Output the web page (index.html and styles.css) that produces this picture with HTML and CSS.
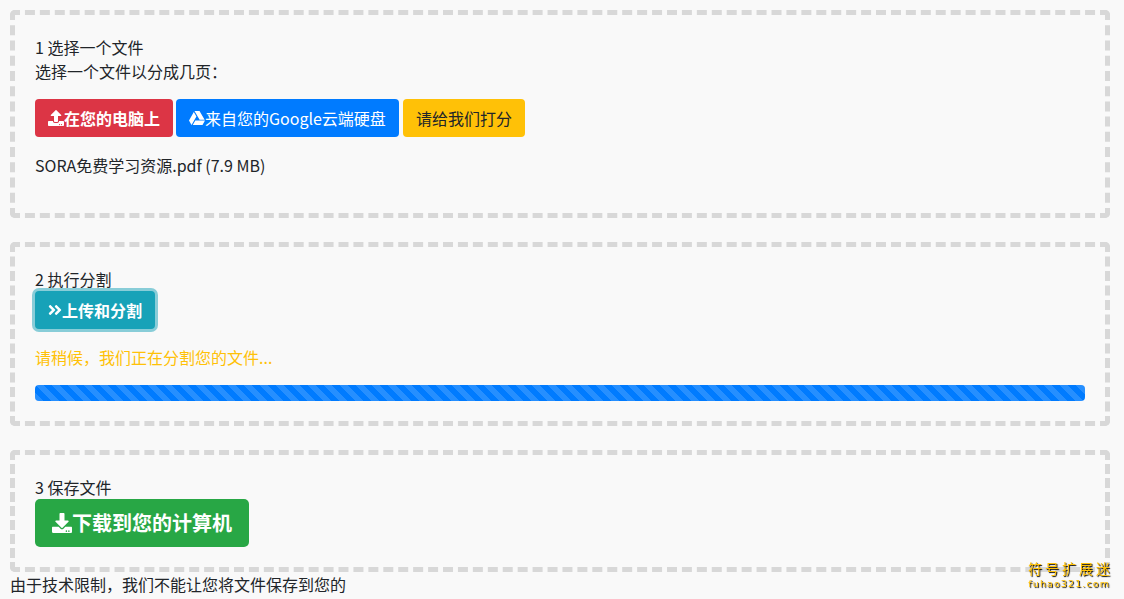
FILE: index.html
```html
<!DOCTYPE html>
<html lang="zh">
<head>
<title>分割PDF</title>
<meta charset="utf-8" />
<link rel="stylesheet" href="styles.css">
</head>
<body>
<div class="step">
  <div>1 选择一个文件</div>
  <p>选择一个文件以分成几页：</p>
  <div class="btn-row">
    <a class="btn btn-danger strong"><svg class="ico" viewBox="0 0 512 512"><path d="M296 384h-80c-13.3 0-24-10.7-24-24V192h-87.7c-17.8 0-26.7-21.5-14.1-34.1L242.3 5.7c7.5-7.5 19.8-7.5 27.3 0l152.2 152.2c12.6 12.6 3.7 34.1-14.1 34.1H320v168c0 13.3-10.7 24-24 24zm216-8v112c0 13.3-10.7 24-24 24H24c-13.3 0-24-10.7-24-24V376c0-13.3 10.7-24 24-24h136v8c0 30.9 25.1 56 56 56h80c30.9 0 56-25.1 56-56v-8h136c13.3 0 24 10.7 24 24zm-124 88c0-11-9-20-20-20s-20 9-20 20 9 20 20 20 20-9 20-20zm64 0c0-11-9-20-20-20s-20 9-20 20 9 20 20 20 20-9 20-20z"/></svg>在您的电脑上</a>
    <a class="btn btn-primary"><svg class="ico" viewBox="0 0 512 512"><path d="M339 314.9L175.4 32h161.2l163.6 282.9H339zm-137.5 23.6L120.9 480h310.5L512 338.5H201.5zM154.1 67.4L0 338.5 80.6 480 237 208.8 154.1 67.4z"/></svg>来自您的Google云端硬盘</a>
    <a class="btn btn-warning">请给我们打分</a>
  </div>
  <p class="file-name">SORA免费学习资源.pdf (7.9 MB)</p>
</div>

<div class="step">
  <div>2 执行分割</div>
  <div class="btn-row">
    <a class="btn btn-info strong"><svg class="ico ico-narrow" viewBox="0 0 448 512"><path d="M224.3 273l-136 136c-9.4 9.4-24.6 9.4-33.9 0l-22.6-22.6c-9.4-9.4-9.4-24.6 0-33.9l96.4-96.4-96.4-96.4c-9.4-9.4-9.4-24.6 0-33.9L54.3 103c9.4-9.4 24.6-9.4 33.9 0l136 136c9.5 9.4 9.5 24.6.1 34zm192-34l-136-136c-9.4-9.4-24.6-9.4-33.9 0l-22.6 22.6c-9.4 9.4-9.4 24.6 0 33.9l96.4 96.4-96.4 96.4c-9.4 9.4-9.4 24.6 0 33.9l22.6 22.6c9.4 9.4 24.6 9.4 33.9 0l136-136c9.4-9.2 9.4-24.4 0-33.8z"/></svg>上传和分割</a>
  </div>
  <p class="wait">请稍候，我们正在分割您的文件...</p>
  <div class="progress"><div class="progress-bar"></div></div>
</div>

<div class="step last">
  <div>3 保存文件</div>
  <div class="btn-row">
    <a class="btn btn-lg btn-success strong"><svg class="ico" viewBox="0 0 512 512"><path d="M216 0h80c13.3 0 24 10.7 24 24v168h87.7c17.8 0 26.7 21.5 14.1 34.1L269.7 378.3c-7.5 7.5-19.8 7.5-27.3 0L90.1 226.1c-12.6-12.6-3.7-34.1 14.1-34.1H192V24c0-13.3 10.7-24 24-24zm296 376v112c0 13.3-10.7 24-24 24H24c-13.3 0-24-10.7-24-24V376c0-13.3 10.7-24 24-24h146.7l49 49c20.1 20.1 52.5 20.1 72.6 0l49-49H488c13.3 0 24 10.7 24 24zm-124 88c0-11-9-20-20-20s-20 9-20 20 9 20 20 20 20-9 20-20zm64 0c0-11-9-20-20-20s-20 9-20 20 9 20 20 20 20-9 20-20z"/></svg>下载到您的计算机</a>
  </div>
</div>
<p>由于技术限制，我们不能让您将文件保存到您的</p>

<div class="watermark">
  <div class="wm-name">符号扩展迷</div>
  <div class="wm-url">fuhao321.com</div>
</div>
</body>
</html>
```

FILE: styles.css
```css
html, body {
  height: 100%;
  overflow: hidden;
}

body {
  margin: 0;
  padding: 10px 14px 0 10px;
  box-sizing: border-box;
  background: #f9f9f9;
  color: #212529;
  font-family: "Noto Sans CJK SC", "Noto Sans", sans-serif;
  font-size: 16px;
  line-height: 24px;
}

p {
  margin: 0 0 16px;
}

.step {
  border: 5px dashed #d8d8d8;
  border-radius: 5px;
  padding: 20px;
  margin-bottom: 24px;
}

.step.last {
  margin-bottom: 0;
}

.btn-row {
  display: flex;
  gap: 3px;
}

.btn-row + p {
  margin-top: 16px;
}

.btn {
  display: flex;
  align-items: center;
  height: 38px;
  box-sizing: border-box;
  padding: 0 13px;
  border-radius: 4px;
  color: #fff;
  white-space: nowrap;
}

.strong {
  font-weight: 700;
}

.ico {
  width: 16px;
  height: 16px;
  margin: 0 0.5px 0 -0.5px;
  fill: currentColor;
  flex: none;
}

.ico-narrow {
  width: 14px;
  margin: 0;
}

.btn-danger { background: #dc3545; }
.btn-primary { background: #007bff; width: 223px; margin-right: 1px; }
.btn-warning { background: #ffc107; color: #212529; }
.btn-success { background: #28a745; }

.btn-info {
  background: #17a2b8;
  box-shadow: 0 0 0 3px rgba(23, 162, 184, 0.5);
}

.btn-lg {
  height: 48px;
  padding: 0 17px;
  border-radius: 5px;
  font-size: 20px;
}

.btn-lg .ico {
  width: 20px;
  height: 20px;
}

.wait {
  color: #ffc107;
  margin-bottom: 16px;
}

.progress {
  height: 16px;
  border-radius: 4px;
  overflow: hidden;
  background: #e9ecef;
}

.progress-bar {
  height: 100%;
  background-color: #007bff;
  background-image: linear-gradient(45deg, rgba(255,255,255,.15) 25%, transparent 25%, transparent 50%, rgba(255,255,255,.15) 50%, rgba(255,255,255,.15) 75%, transparent 75%, transparent);
  background-size: 16px 16px;
}

.watermark {
  position: fixed;
  right: 14px;
  bottom: 9px;
  text-align: right;
  color: #ffc107;
  text-shadow: 1px 1px 1px #000;
}

.wm-name {
  font-size: 14px;
  line-height: 15px;
  letter-spacing: 3px;
  margin-right: -3px;
  transform: translateY(-1px);
}

.wm-url {
  font-size: 9.5px;
  line-height: 13px;
  letter-spacing: 1.1px;
  font-family: "DejaVu Sans", sans-serif;
}
```
